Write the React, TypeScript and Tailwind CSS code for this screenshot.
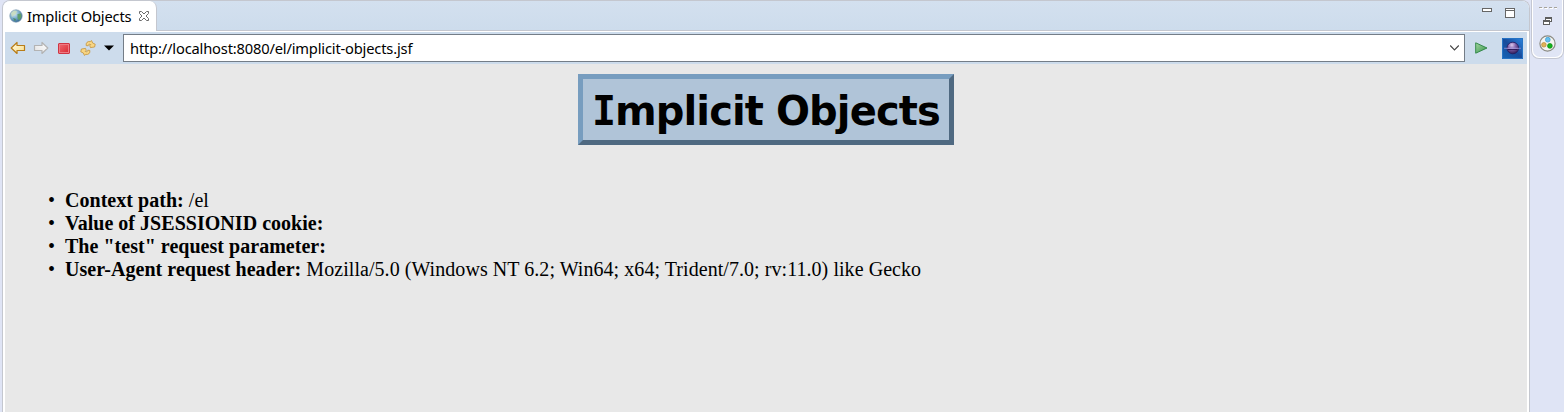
import React from "react";

function Globe() {
  return (
    <svg width="14" height="14" viewBox="0 0 14 14" className="shrink-0">
      <defs>
        <radialGradient id="globe" cx=".35" cy=".3" r=".75">
          <stop offset="0" stopColor="#e3f0f6" />
          <stop offset=".5" stopColor="#7fb0cd" />
          <stop offset="1" stopColor="#2b6191" />
        </radialGradient>
      </defs>
      <circle cx="7" cy="7" r="6.2" fill="url(#globe)" stroke="#7f9bb0" strokeWidth=".7" />
      <path d="M2 4 5 1.5 8 2 7 5 4.5 6.5 3 8Z" fill="#c9dcbc" opacity=".85" />
      <path d="M8.5 5 12 4.5 12.5 8 10 11.5 8.5 9Z" fill="#5f9d6c" />
      <path d="M4 9 7 10 6 12.5Z" fill="#4c8c68" />
    </svg>
  );
}

function CloseGlyph() {
  return (
    <svg width="12" height="12" viewBox="0 0 12 12" className="shrink-0">
      <path
        d="M1.5 1.5H3.5L6 4 8.5 1.5H10.5V3.5L8 6 10.5 8.5V10.5H8.5L6 8 3.5 10.5H1.5V8.5L4 6 1.5 3.5Z"
        fill="#fff"
        stroke="#6b6b6b"
      />
    </svg>
  );
}

function Arrow({ id, stroke, from, to, flip }: { id: string; stroke: string; from: string; to: string; flip?: boolean }) {
  return (
    <svg width="16" height="14" viewBox="0 0 16 14" className="shrink-0">
      <defs>
        <linearGradient id={id} x1="0" y1="0" x2="1" y2="1">
          <stop offset="0" stopColor={from} />
          <stop offset="1" stopColor={to} />
        </linearGradient>
      </defs>
      <path
        d="M1.2 7 7 1.5V4.5H14.5V9.5H7V12.5Z"
        transform={flip ? "matrix(-1 0 0 1 16 0)" : undefined}
        fill={`url(#${id})`}
        stroke={stroke}
        strokeWidth="1.2"
        strokeLinejoin="round"
      />
    </svg>
  );
}

function Refresh() {
  return (
    <svg width="16" height="16" viewBox="0 0 16 16" className="shrink-0">
      <g fill="#f8d684" stroke="#c4933a" strokeWidth=".8" strokeLinejoin="round">
        <path d="M6.2 5.6C5.6 3 7.5 1 10.2 1.6L11.6 .6 12.6 3 15.2 4.2 14.6 7 10.4 7.6 9.8 5.6 10.8 4.6C9.2 3.8 8.2 4.4 8.2 5.8Z" />
        <path d="M9.8 10.4C10.4 13 8.5 15 5.8 14.4L4.4 15.4 3.4 13 .8 11.8 1.4 9 5.6 8.4 6.2 10.4 5.2 11.4C6.8 12.2 7.8 11.6 7.8 10.2Z" />
      </g>
    </svg>
  );
}

function Planet() {
  return (
    <svg width="21" height="21" viewBox="0 0 21 21" className="shrink-0">
      <defs>
        <linearGradient id="sky" x1="0" y1="1" x2="1" y2="0">
          <stop offset="0" stopColor="#1466b8" />
          <stop offset=".5" stopColor="#174b9b" />
          <stop offset="1" stopColor="#2d86e0" />
        </linearGradient>
        <radialGradient id="moon" cx=".42" cy=".25" r=".8">
          <stop offset="0" stopColor="#dccbee" />
          <stop offset=".4" stopColor="#8464ab" />
          <stop offset="1" stopColor="#291653" />
        </radialGradient>
      </defs>
      <path d="M0 0H21V21H0Z" fill="url(#sky)" />
      <path d="M.5 .5H20.5V20.5H.5Z" fill="none" stroke="#2673c4" />
      <circle cx="10.8" cy="10" r="5.8" fill="url(#moon)" stroke="#2a1a5c" strokeWidth=".8" />
      <path d="M6 11.5H15.5" stroke="#2a1553" />
      <path d="M2 10.3Q10.5 9 19 10.3Q10.5 11.2 2 10.3Z" fill="#b9a9e0" stroke="#a093d6" strokeWidth=".4" />
    </svg>
  );
}

const rows: [string, string][] = [
  ["Context path:", "/el"],
  ["Value of JSESSIONID cookie:", ""],
  ['The "test" request parameter:', ""],
  ["User-Agent request header:", "Mozilla/5.0 (Windows NT 6.2; Win64; x64; Trident/7.0; rv:11.0) like Gecko"],
];

function TabBar() {
  return (
    <div className="flex h-[30px] shrink-0 justify-between border-b border-[#c4c7cf] bg-linear-to-b from-[#d3e0ef] to-[#cddcec]">
      <div className="-mb-px flex h-[30px] w-[154px] items-center rounded-tr-[7px] rounded-tl-[5px] border-r border-[#c4c7cf] bg-white pl-[6px]">
        <Globe />
        <span className="ml-[4px] w-[105px] font-['Noto_Sans','Open_Sans',sans-serif] text-[14.7px] leading-[20px] tracking-[-0.18px] whitespace-nowrap text-black">
          Implicit Objects
        </span>
        <span className="ml-[6px] flex">
          <CloseGlyph />
        </span>
      </div>
      <div className="flex pt-[7px] pr-[14px]">
        <div className="mr-[13px] h-[4px] w-[10px] border border-[#666] bg-white" />
        <div className="h-[10px] w-[10px] border border-[#666] bg-white">
          <div className="mt-px h-px bg-[#666]" />
        </div>
      </div>
    </div>
  );
}

function Toolbar() {
  return (
    <div className="mx-[2px] mt-px flex h-[32px] shrink-0 items-center bg-[#cddcec]">
      <span className="ml-[5px] flex">
        <Arrow id="back" stroke="#b87c17" from="#fffbe8" to="#f9dc83" />
      </span>
      <span className="ml-[7px] flex">
        <Arrow id="forward" stroke="#b3b3b3" from="#fff" to="#e2e2e2" flip />
      </span>
      <span className="ml-[9px] h-[11px] w-[12px] rounded-[1px] border border-[#cf3543] bg-linear-to-br from-[#ee6872] to-[#d91f2e] shadow-[inset_0_0_0_1px_#ee7b83]" />
      <span className="ml-[10px] flex">
        <Refresh />
      </span>
      <svg width="10" height="6" viewBox="0 0 10 6" className="ml-[8px]">
        <path d="M0 .5H10L5 5.5Z" fill="#000" />
      </svg>
      <div className="ml-[9px] flex h-[28px] w-[1342px] items-center justify-between border border-[#747d87] bg-white pr-[4px] pl-[6px]">
        <span className="font-['Noto_Sans','Open_Sans',sans-serif] text-[14.7px] leading-[20px] tracking-[-0.18px] whitespace-nowrap text-black">
          http://localhost:8080/el/implicit-objects.jsf
        </span>
        <svg width="11" height="8" viewBox="0 0 11 8">
          <path d="M1.2 1.5 5.5 6 9.8 1.5" fill="none" stroke="#454545" strokeWidth="1.1" />
        </svg>
      </div>
      <svg width="13" height="12" viewBox="0 0 13 12" className="ml-[10px]">
        <defs>
          <linearGradient id="go" x1="0" y1="0" x2="1" y2="1">
            <stop offset="0" stopColor="#a5d6a0" />
            <stop offset="1" stopColor="#33934a" />
          </linearGradient>
        </defs>
        <path d="M.7 .8 12 6 .7 11.2Z" fill="url(#go)" stroke="#358a4c" />
      </svg>
      <span className="ml-[14px] flex">
        <Planet />
      </span>
    </div>
  );
}

function Page() {
  return (
    <div className="mx-[2px] flex flex-1 flex-col bg-[#e8e8e8] pt-[10px]">
      <h1 className="flex h-[71px] w-[376px] items-center self-center border-5 border-t-[#779dbf] border-r-[#4f6981] border-b-[#4f6981] border-l-[#779dbf] bg-[#b0c4d8] pt-[2px] pl-[9px] font-['DejaVu_Sans',sans-serif] text-[40px] leading-[48px] font-bold tracking-[-0.9px] whitespace-pre text-black">
        <span className="w-[23px] font-['DejaVu_Sans_Mono',monospace]">I</span>
        <span>mplicit Objects</span>
      </h1>
      <ul className="mt-[44px] font-['Liberation_Serif',serif] text-[20px] leading-[23px] text-black">
        {rows.map(([label, value]) => (
          <li key={label} className="flex whitespace-pre">
            <span className="ml-[43px] w-[17px]">•</span>
            <b className="tracking-[0.03px]">{label}</b>
            <span className="tracking-[0.055px]"> {value}</span>
          </li>
        ))}
      </ul>
    </div>
  );
}

function Trim() {
  return (
    <div className="flex w-[34px] shrink-0 flex-col pl-px">
      <div className="h-[59px] w-[33px] rounded-b-[8px] border border-t-0 border-[#c4c7d2] bg-white px-px pb-px">
        <div className="flex h-full flex-col items-center rounded-b-[7px] bg-[#e0e5f5] pt-[7px]">
          <svg width="18" height="2" viewBox="0 0 18 2">
            <path d="M0 .5H3M5 .5H8M10 .5H13M15 .5H18" stroke="#a6a39b" />
            <path d="M1 1.5H4M6 1.5H9M11 1.5H14M16 1.5H18" stroke="#fff" />
          </svg>
          <svg width="9" height="8" viewBox="0 0 9 8" className="mt-[8px]" shapeRendering="crispEdges">
            <path d="M2.5 .5H8.5V4.5H2.5Z" fill="#fff" stroke="#5e5e5e" />
            <path d="M2 1.5H9" stroke="#5e5e5e" />
            <path d="M.5 3.5H6.5V7.5H.5Z" fill="#fff" stroke="#5e5e5e" />
            <path d="M0 4.5H7" stroke="#5e5e5e" />
          </svg>
          <svg width="17" height="17" viewBox="0 0 17 17" className="mt-[10px]">
            <circle cx="8.5" cy="8.5" r="7.6" fill="#f4f4f1" stroke="#8b8b83" strokeWidth="1.2" />
            <circle cx="8.8" cy="4.7" r="2.4" fill="#66c0ef" stroke="#3096cf" strokeWidth=".7" />
            <circle cx="4.9" cy="9.8" r="2.3" fill="#dfb258" stroke="#b88a34" strokeWidth=".7" />
            <circle cx="10.9" cy="10.9" r="2.4" fill="#12b41c" stroke="#08880f" strokeWidth=".7" />
          </svg>
        </div>
      </div>
    </div>
  );
}

export default function App() {
  return (
    <div className="flex h-[412px] w-[1564px] overflow-hidden bg-[#dfe4f5] pl-[2px]">
      <main className="flex w-[1528px] shrink-0 flex-col overflow-hidden rounded-t-[8px] border-x border-t border-[#c4c7cf] bg-white">
        <TabBar />
        <Toolbar />
        <Page />
      </main>
      <Trim />
    </div>
  );
}
